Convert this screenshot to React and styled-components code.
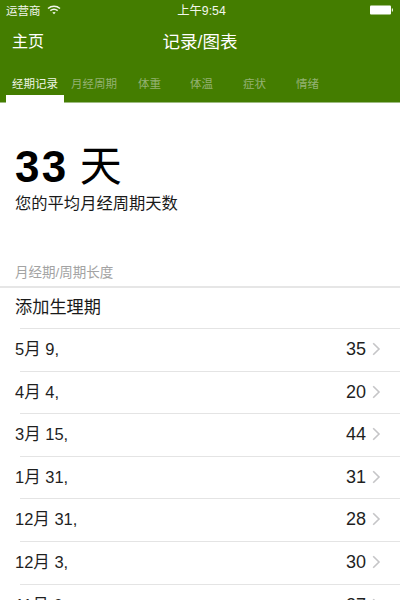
import React from "react";
import styled, { createGlobalStyle } from "styled-components";

const Global = createGlobalStyle`
  html, body { margin: 0; padding: 0; background: #fff; }
  body { font-family: "Liberation Sans", "Noto Sans CJK SC", sans-serif; width: 400px; height: 600px; overflow: hidden; }
`;
const Screen = styled.div`width: 400px; height: 600px; overflow: hidden; background: #fff; color: #111;`;
const Header = styled.header`background: #447d00; height: 102px; border-bottom: 1px solid #9dbb80; display: flex; flex-direction: column; color: #fff;`;
const StatusBar = styled.div`height: 20px; padding: 0 6px; display: grid; grid-template-columns: 1fr auto 1fr; align-items: center; font-size: 11.5px; color: #f2f6ec;`;
const StatusLeft = styled.div`display: flex; align-items: center; gap: 6px;`;
const StatusRight = styled.div`display: flex; justify-content: flex-end;`;
const Clock = styled.div`font-size: 12.3px; margin-left: 3px;`;
const NavBar = styled.div`height: 42px; padding: 0 12px 2px; box-sizing: border-box; display: grid; grid-template-columns: 1fr auto 1fr; align-items: center; font-size: 16px;`;
const NavTitle = styled.span`font-size: 17.5px;`;
const Tabs = styled.nav`display: flex; padding-left: 6px; height: 40px;`;
const Tab = styled.div`
  width: ${p => p.$w}px; height: 40px; box-sizing: border-box; padding-top: 14px; text-align: center; font-size: 11.5px; line-height: 16px;
  color: ${p => (p.$active ? "#eef4e6" : "#94b274")};
  position: relative;
`;
const Underline = styled.span`position: absolute; left: 0; right: 0; bottom: -1px; height: 8px; background: #fff;`;
const Summary = styled.section`padding: 35px 15px 0; height: 162px; box-sizing: border-box;`;
const Big = styled.div`font-size: 44px; line-height: 58px; font-weight: 700; color: #000; display: flex; gap: 11px; align-items: center;`;
const BigDigits = styled.span`letter-spacing: 2.4px;`;
const BigUnit = styled.span`font-weight: 400; font-size: 42px;`;
const Caption = styled.div`font-size: 16.3px; line-height: 22px; margin-top: -4px; color: #1a1a1a;`;
const SectionTitle = styled.div`padding: 0 15px; height: 21px; line-height: 16px; font-size: 13.5px; color: #a3a3a3; border-bottom: 2px solid #e6e6e6;`;
const List = styled.div`display: flex; flex-direction: column;`;
const AddRow = styled.div`height: 40px; line-height: 38px; padding-left: 15px; font-size: 17.2px; color: #1a1a1a;`;
const Row = styled.div`
  height: 42.6px; box-sizing: border-box; padding: 10px 19px 0 15px; display: flex; align-items: baseline; justify-content: space-between;
  font-size: 16.5px; line-height: 22px; color: #1f1f1f; position: relative;
  &::before { content: ""; position: absolute; left: 20px; right: 0; top: 0; height: 1px; background: #e4e4e4; }
`;
const Right = styled.div`display: flex; align-items: baseline; gap: 6px; font-size: 18px;`;
const ChevronBox = styled.span`align-self: center; display: flex;`;

const Wifi = () => (
  <svg width="14" height="10" viewBox="0 0 14 10" fill="none" stroke="#f2f6ec" strokeWidth="1.5">
    <path d="M1 3.5C4.5.5 9.5.5 13 3.5" />
    <path d="M3.3 5.6c2.2-1.7 5.2-1.7 7.4 0" />
    <path d="M7 9.2 5.3 7.4c1-.7 2.4-.7 3.4 0Z" fill="#f2f6ec" stroke="none" />
  </svg>
);
const Battery = () => (
  <svg width="24" height="10" viewBox="0 0 24 10">
    <rect x="0" y="0.5" width="21" height="9" rx="1" fill="#fff" />
    <rect x="21.8" y="3.5" width="1.2" height="3" fill="#dfe9d2" />
  </svg>
);
const Chevron = () => (
  <svg width="9" height="14" viewBox="0 0 9 14" fill="none" stroke="#c5c5c7" strokeWidth="1.6">
    <path d="M1.2 1.2 7 7l-5.8 5.8" />
  </svg>
);

const tabs = [["经期记录", 58], ["月经周期", 60], ["体重", 51], ["体温", 53], ["症状", 53], ["情绪", 53]];
const rows = [["5月 9,", 35], ["4月 4,", 20], ["3月 15,", 44], ["1月 31,", 31], ["12月 31,", 28], ["12月 3,", 30], ["11月 6,", 27]];

export default function App() {
  return (
    <Screen>
      <Global />
      <Header>
        <StatusBar>
          <StatusLeft><span>运营商</span><Wifi /></StatusLeft>
          <Clock>上午9:54</Clock>
          <StatusRight><Battery /></StatusRight>
        </StatusBar>
        <NavBar>
          <span>主页</span>
          <NavTitle>记录/图表</NavTitle>
          <span />
        </NavBar>
        <Tabs>
          {tabs.map(([t, w], i) => (
            <Tab key={t} $w={w} $active={i === 0}>{t}{i === 0 && <Underline />}</Tab>
          ))}
        </Tabs>
      </Header>
      <Summary>
        <Big><BigDigits>33</BigDigits><BigUnit>天</BigUnit></Big>
        <Caption>您的平均月经周期天数</Caption>
      </Summary>
      <SectionTitle>月经期/周期长度</SectionTitle>
      <List>
        <AddRow>添加生理期</AddRow>
        {rows.map(([d, n]) => (
          <Row key={d}><span>{d}</span><Right><span>{n}</span><ChevronBox><Chevron /></ChevronBox></Right></Row>
        ))}
      </List>
    </Screen>
  );
}
